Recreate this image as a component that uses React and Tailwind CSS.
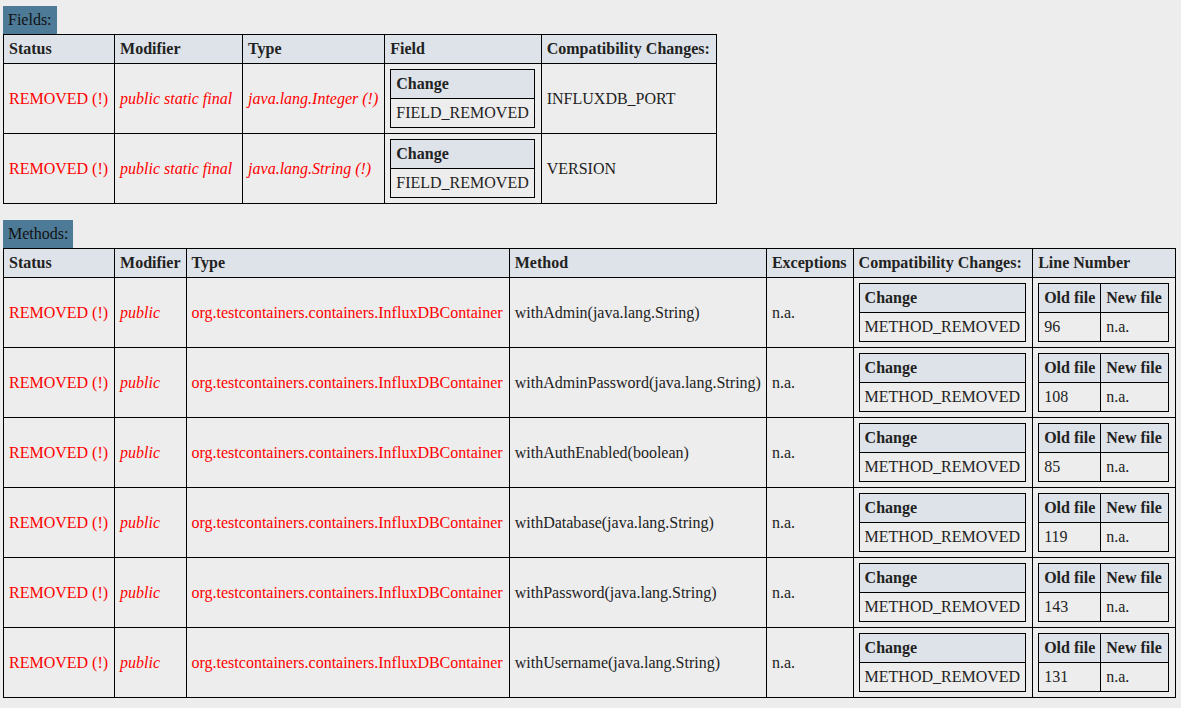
const fields = [
	{ type: "java.lang.Integer (!)", name: "INFLUXDB_PORT" },
	{ type: "java.lang.String (!)", name: "VERSION" },
];

const methods = [
	{ name: "withAdmin(java.lang.String)", old: "96" },
	{ name: "withAdminPassword(java.lang.String)", old: "108" },
	{ name: "withAuthEnabled(boolean)", old: "85" },
	{ name: "withDatabase(java.lang.String)", old: "119" },
	{ name: "withPassword(java.lang.String)", old: "143" },
	{ name: "withUsername(java.lang.String)", old: "131" },
];

// outer table cells are a hair wider on the right than the nested ones
const th = "border border-black bg-[#dee3e9] py-[5px] pl-[5px] pr-[6px] text-left font-bold whitespace-nowrap";
const td = "border border-black py-[5px] pl-[5px] pr-[6px] text-left align-middle whitespace-nowrap";
const nth = "border border-black bg-[#dee3e9] p-[5px] text-left font-bold whitespace-nowrap";
const ntd = "border border-black p-[5px] text-left whitespace-nowrap";

function ChangeTable({ value }) {
	return (
		<table className="border-collapse border border-black">
			<thead>
				<tr>
					<th className={nth}>Change</th>
				</tr>
			</thead>
			<tbody>
				<tr>
					<td className={ntd}>{value}</td>
				</tr>
			</tbody>
		</table>
	);
}

function LineTable({ old }) {
	return (
		<table className="border-collapse border border-black">
			<thead>
				<tr>
					<th className={nth}>Old file</th>
					<th className={nth + " pr-[6px]"}>New file</th>
				</tr>
			</thead>
			<tbody>
				<tr>
					<td className={ntd}>{old}</td>
					<td className={ntd}>n.a.</td>
				</tr>
			</tbody>
		</table>
	);
}

function Label({ children }) {
	return (
		<div className="inline-block bg-[#4d7a97] px-[5px] py-[5px] text-[#111]">{children}</div>
	);
}

export default function App() {
	return (
		<div className="min-h-[708px] w-[1181px] bg-[#ededed] px-[3px] pt-[6px] font-['Liberation_Serif',serif] text-[16px] leading-[normal] text-[#222]">
			{/* Fields */}
			<Label>Fields:</Label>
			<table className="border-collapse border border-black">
				<thead>
					<tr>
						<th className={th}>Status</th>
						<th className={th}>Modifier</th>
						<th className={th}>Type</th>
						<th className={th}>Field</th>
						<th className={th}>Compatibility Changes:</th>
					</tr>
				</thead>
				<tbody>
					{fields.map((f, i) => (
						<tr key={i}>
							<td className={td + " text-[#f00]"}>REMOVED (!)</td>
							<td className={td + " !pr-[10px] text-[#f00] italic"}>public static final</td>
							<td className={td + " text-[#f00] italic"}>{f.type}</td>
							<td className={td}>
								<ChangeTable value="FIELD_REMOVED" />
							</td>
							<td className={td}>{f.name}</td>
						</tr>
					))}
				</tbody>
			</table>

			{/* Methods */}
			<div className="mt-[16px]">
				<Label>Methods:</Label>
			</div>
			<table className="border-collapse border border-black">
				<thead>
					<tr>
						<th className={th}>Status</th>
						<th className={th + " !pr-[5px]"}>Modifier</th>
						<th className={th}>Type</th>
						<th className={th}>Method</th>
						<th className={th}>Exceptions</th>
						<th className={th}>Compatibility Changes:</th>
						<th className={th}>Line Number</th>
					</tr>
				</thead>
				<tbody>
					{methods.map((m, i) => (
						<tr key={i}>
							<td className={td + " text-[#f00]"}>REMOVED (!)</td>
							<td className={td + " text-[#f00] italic"}>public</td>
							<td className={td + " text-[#f00]"}>org.testcontainers.containers.InfluxDBContainer</td>
							<td className={td + " !pr-[5px]"}>{m.name}</td>
							<td className={td}>n.a.</td>
							<td className={td}>
								<ChangeTable value="METHOD_REMOVED" />
							</td>
							<td className={td}>
								<LineTable old={m.old} />
							</td>
						</tr>
					))}
				</tbody>
			</table>
		</div>
	);
}
